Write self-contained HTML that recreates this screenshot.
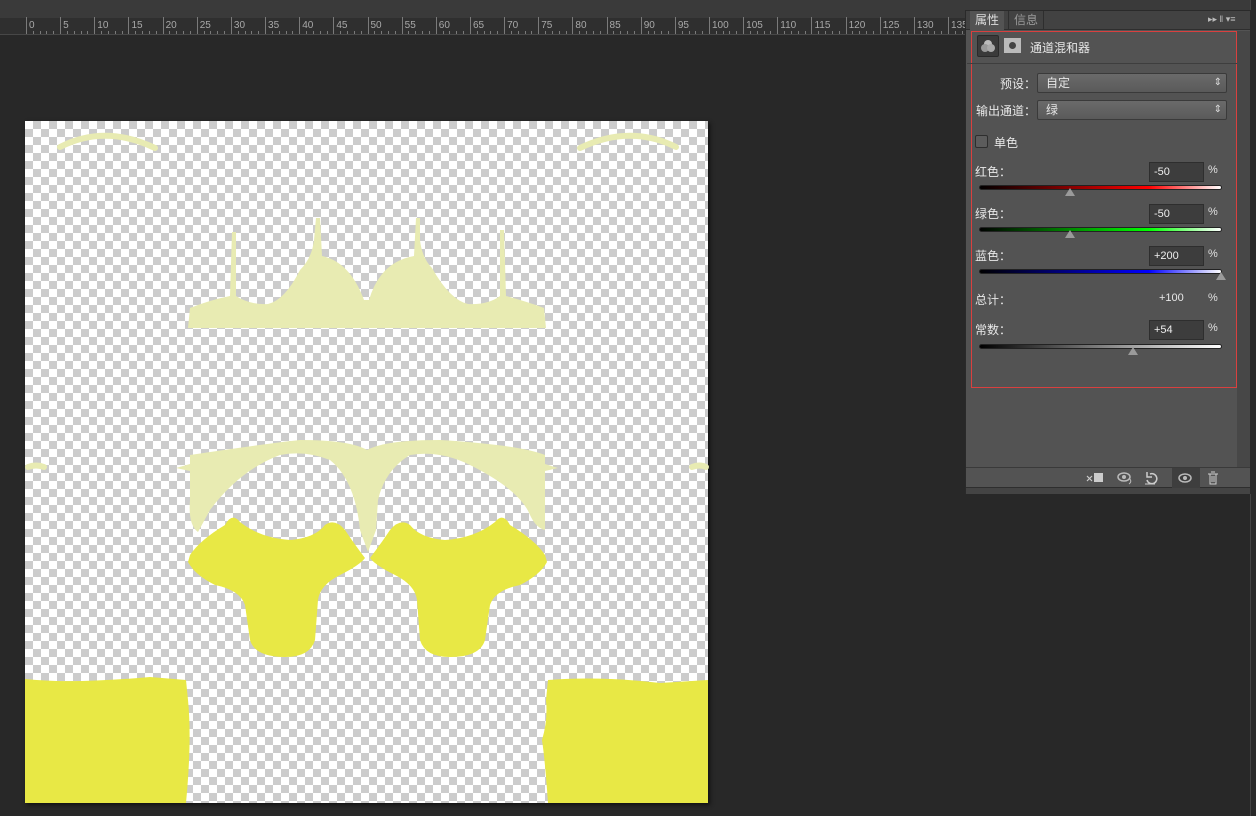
<!DOCTYPE html>
<html><head><meta charset="utf-8"><style>
*{margin:0;padding:0;box-sizing:border-box}
body{width:1256px;height:816px;background:#282828;position:relative;overflow:hidden;font-family:"Liberation Sans","Noto Sans CJK SC",sans-serif;font-size:12px;color:#e6e6e6}
.abs{position:absolute}
#topbar{left:0;top:0;width:1256px;height:18px;background:#3a3a3a}
#ruler{left:0;top:18px;width:1256px;height:17px;background:#2f2f2f;border-bottom:1px solid #474747}
.rl{position:absolute;top:2px;font-size:10px;color:#a8a8a8}
.tk{position:absolute;width:1px;background:#7a7a7a;bottom:0}
#canvas{left:25px;top:121px;width:683px;height:682px;background-color:#fff;background-image:linear-gradient(45deg,#ccc 25%,transparent 25%,transparent 75%,#ccc 75%),linear-gradient(45deg,#ccc 25%,transparent 25%,transparent 75%,#ccc 75%);background-size:16px 16px;background-position:0 0,8px 8px;box-shadow:2px 2px 4px #111}
#panel{left:965px;top:10px;width:286px;height:484px;background:#535353;border:1px solid #2a2a2a}
#tabs{left:0;top:0;width:284px;height:19px;background:#424242;border-bottom:1px solid #2e2e2e}
.tab{position:absolute;top:0;height:19px;line-height:19px;padding:0 5px;font-size:12px}
#red{left:5px;top:20px;width:266px;height:357px;border:1px solid #d9403f}
.lbl{position:absolute;font-size:12px;color:#e8e8e8}
.dd{position:absolute;left:71px;width:190px;height:20px;border:1px solid #3a3a3a;border-radius:2px;background:linear-gradient(#6a6a6a,#5a5a5a);padding-left:8px;line-height:18px;font-size:12px}
.dd:after{content:"⇕";position:absolute;right:4px;top:0;font-size:10px;color:#ddd}
.inp{position:absolute;left:183px;width:55px;height:20px;background:#3d3d3d;border:1px solid #2e2e2e;padding-left:4px;line-height:18px;font-size:11px;color:#eee}
.pct{position:absolute;left:242px;font-size:11px;color:#e0e0e0}
.sl{position:absolute;left:13px;width:243px;height:5px;border:1px solid #222;border-radius:3px}
.th{position:absolute;width:0;height:0;border-left:5px solid transparent;border-right:5px solid transparent;border-bottom:8px solid #9a9a9a}
</style></head><body>
<div class="abs" id="topbar"></div>
<div class="abs" id="ruler"></div>
<script>
(function(){var r=document.getElementById('ruler');var h='';for(var i=0;i<=27;i++){var x=26+i*34.15;h+='<div class="tk" style="left:'+x+'px;height:17px"></div><div class="rl" style="left:'+(x+3)+'px">'+(i*5)+'</div>';for(var j=1;j<5;j++){h+='<div class="tk" style="left:'+(x+j*6.83)+'px;height:3px"></div>';}}r.innerHTML=h;})();
</script>
<div class="abs" id="canvas"></div>
<svg class="abs" style="left:0;top:0" width="1256" height="816">
<g fill="none" stroke="#e8ebb2" stroke-width="6" stroke-linecap="round">
<path d="M60,147 Q105,124 155,148"/>
<path d="M580,148 Q630,124 676,147"/>
<path d="M28,467 Q36,464 44,467"/>
<path d="M692,467 Q700,464 706,467"/>
</g>
<g fill="#e8ebb2">
<path d="M188,328 L190,308 Q210,300 230,296 L232,232 L236,232 L236,296 Q250,305 268,304 Q285,300 300,270 Q312,258 314,240 L316,218 L320,218 L322,256 Q350,262 364,300 L369,300 Q380,262 414,256 L416,218 L420,218 L420,240 Q422,258 432,268 Q450,300 468,304 Q488,305 500,296 L500,230 L504,230 L506,296 Q528,302 544,308 L546,328 Z"/>
<path d="M176,468 L190,464 L190,455 Q270,443 300,440 Q350,440 367,450 Q385,440 440,440 Q520,445 545,455 L545,464 L558,468 L545,471 L545,530 Q536,528 530,515 Q520,490 470,465 Q440,450 410,455 Q385,470 378,500 L376,530 L368,552 L360,530 Q355,480 330,460 Q305,450 280,455 Q240,470 210,510 L198,532 Q188,525 190,500 L190,471 Z"/>
</g>
<g fill="#e8e845">
<path d="M190,555 Q200,540 225,525 Q232,512 240,522 Q260,538 290,540 Q315,538 325,525 Q335,518 345,530 Q355,545 365,558 Q360,565 340,575 Q320,585 318,600 L315,640 Q310,657 285,657 Q255,657 250,640 L245,605 Q240,590 215,585 Q195,575 188,562 Z"/>
<path transform="translate(735,0) scale(-1,1)" d="M190,555 Q200,540 225,525 Q232,512 240,522 Q260,538 290,540 Q315,538 325,525 Q335,518 345,530 Q355,545 365,558 Q360,565 340,575 Q320,585 318,600 L315,640 Q310,657 285,657 Q255,657 250,640 L245,605 Q240,590 215,585 Q195,575 188,562 Z"/>
<path d="M25,679 Q70,684 150,677 L186,680 L188,700 Q192,740 186,803 L25,803 Z"/>
<path d="M548,680 Q600,676 660,683 L708,680 L708,803 L548,803 Q545,760 542,740 Q548,720 546,700 Z"/>
</g>
</svg>
<div class="abs" style="left:1250px;top:0;width:6px;height:816px;background:#2a2a2a;border-left:1px solid #444"></div>
<div class="abs" id="panel">
<div class="abs" id="tabs">
<div class="tab" style="left:4px;background:#535353;color:#ddd">属性</div>
<div class="tab" style="left:42px;color:#9a9a9a;border-left:1px solid #2e2e2e;border-right:1px solid #2e2e2e">信息</div>
<div class="abs" style="left:242px;top:3px;font-size:9px;color:#bbb">▸▸ ‖ ▾≡</div>
</div>
<div class="abs" id="red"></div>
<div class="abs" style="left:11px;top:24px;width:22px;height:22px;background:#3a3a3a;border:1px solid #2a2a2a;border-radius:2px"><svg width="20" height="20"><circle cx="10" cy="8" r="4" fill="#bbb"/><circle cx="7" cy="12" r="4" fill="#999"/><circle cx="13" cy="12" r="4" fill="#aaa"/></svg></div>
<div class="abs" style="left:38px;top:27px;width:17px;height:15px;background:#bbb"><div style="margin:4px 5px;width:7px;height:7px;border-radius:50%;background:#444"></div></div>
<div class="lbl" style="left:64px;top:28px">通道混和器</div>
<div class="abs" style="left:1px;top:52px;width:270px;height:1px;background:#3e3e3e"></div>
<div class="lbl" style="left:34px;top:64px">预设：</div>
<div class="dd" style="top:62px">自定</div>
<div class="lbl" style="left:10px;top:91px">输出通道：</div>
<div class="dd" style="top:89px">绿</div>
<div class="abs" style="left:9px;top:124px;width:13px;height:13px;border:1px solid #2e2e2e;background:#5c5c5c;border-radius:2px"></div>
<div class="lbl" style="left:28px;top:123px">单色</div>
<div class="lbl" style="left:9px;top:152px">红色：</div><div class="inp" style="top:151px">-50</div><div class="pct" style="top:153px">%</div>
<div class="sl" style="top:174px;background:linear-gradient(90deg,#000,#f00 70%,#fff)"></div><div class="th" style="left:99px;top:177px"></div>
<div class="lbl" style="left:9px;top:194px">绿色：</div><div class="inp" style="top:193px">-50</div><div class="pct" style="top:195px">%</div>
<div class="sl" style="top:216px;background:linear-gradient(90deg,#000,#0f0 70%,#fff)"></div><div class="th" style="left:99px;top:219px"></div>
<div class="lbl" style="left:9px;top:236px">蓝色：</div><div class="inp" style="top:235px">+200</div><div class="pct" style="top:237px">%</div>
<div class="sl" style="top:258px;background:linear-gradient(90deg,#000,#00f 70%,#fff)"></div><div class="th" style="left:250px;top:261px"></div>
<div class="lbl" style="left:9px;top:280px">总计：</div><div class="lbl" style="left:193px;top:281px;font-size:11px">+100</div><div class="pct" style="top:281px">%</div>
<div class="lbl" style="left:9px;top:310px">常数：</div><div class="inp" style="top:309px">+54</div><div class="pct" style="top:311px">%</div>
<div class="sl" style="top:333px;background:linear-gradient(90deg,#000,#fff)"></div><div class="th" style="left:162px;top:336px"></div>
<div class="abs" style="left:271px;top:20px;width:13px;height:436px;background:#474747"></div>
<div class="abs" style="left:0;top:456px;width:284px;height:21px;background:#535353;border-top:1px solid #3a3a3a;border-bottom:1px solid #2e2e2e"></div>
<div class="abs" style="left:206px;top:457px;width:28px;height:20px;background:#3e3e3e"></div>
<svg class="abs" style="left:118px;top:458px" width="140" height="18">
<rect x="10" y="4" width="9" height="9" fill="#ccc"/><path d="M3,7 l5,5 M3,12 l5,-5" stroke="#ccc" stroke-width="1.2"/>
<ellipse cx="40" cy="8" rx="6" ry="4" fill="none" stroke="#bbb" stroke-width="1.5"/><circle cx="40" cy="8" r="2" fill="#bbb"/><path d="M46,10 q2,3 -1,5" stroke="#bbb" fill="none"/>
<path d="M66,5 a5,5 0 1 1 -3,6 M63,3 v5 h5" stroke="#ccc" fill="none" stroke-width="1.5"/><path d="M61,15 h10" stroke="#ccc"/>
<ellipse cx="101" cy="9" rx="6" ry="4" fill="none" stroke="#bbb" stroke-width="1.5"/><circle cx="101" cy="9" r="2" fill="#bbb"/>
<path d="M124,5 h10 M126,5 v10 h6 v-10 M128,7 v6 M130,7 v6 M127,3 h4" stroke="#ccc" fill="none"/>
</svg>
<div class="abs" style="left:0;top:477px;width:284px;height:6px;background:#444"></div>
</div>
</body></html>
